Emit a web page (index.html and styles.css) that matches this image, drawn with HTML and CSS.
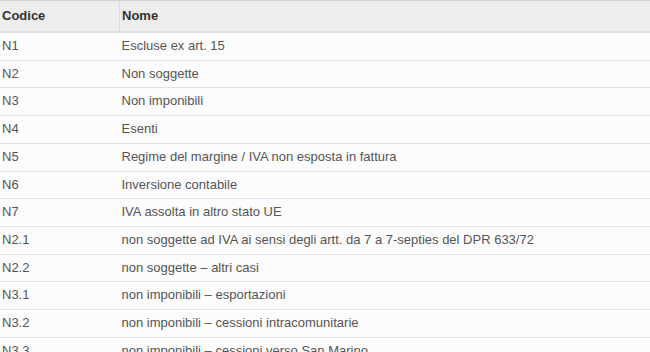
FILE: index.html
```html
<!DOCTYPE html>
<html lang="it">
<head>
<meta charset="utf-8">
<title>Natura</title>
<link rel="stylesheet" href="styles.css">
</head>
<body>
<table class="grid">
  <thead>
    <tr><th class="c-code">Codice</th><th class="c-name">Nome</th></tr>
  </thead>
  <tbody>
    <tr><td>N1</td><td>Escluse ex art. 15</td></tr>
    <tr><td>N2</td><td>Non soggette</td></tr>
    <tr><td>N3</td><td>Non imponibili</td></tr>
    <tr><td>N4</td><td>Esenti</td></tr>
    <tr><td>N5</td><td>Regime del margine / IVA non esposta in fattura</td></tr>
    <tr><td>N6</td><td>Inversione contabile</td></tr>
    <tr><td>N7</td><td>IVA assolta in altro stato UE</td></tr>
    <tr><td>N2.1</td><td>non soggette ad IVA ai sensi degli artt. da 7 a 7-septies del DPR 633/72</td></tr>
    <tr><td>N2.2</td><td>non soggette – altri casi</td></tr>
    <tr><td>N3.1</td><td>non imponibili – esportazioni</td></tr>
    <tr><td>N3.2</td><td>non imponibili – cessioni intracomunitarie</td></tr>
    <tr><td>N3.3</td><td>non imponibili – cessioni verso San Marino</td></tr>
  </tbody>
</table>
</body>
</html>
```
FILE: styles.css
```css
html, body {
  margin: 0;
  padding: 0;
  background: #ffffff;
  overflow: hidden;
}
.grid {
  width: 650px;
  border-collapse: collapse;
  font-family: "Liberation Sans", Arial, sans-serif;
  font-size: 13px;
  line-height: 18.7px;
  color: #555555;
}
.grid th {
  text-align: left;
  font-weight: bold;
  color: #333333;
  background: #ededed;
  border-top: 1px solid #cfcfd4;
  border-bottom: 2px solid #dde0e4;
  padding: 5px 2px 5px 2px;
  height: 20px;
}
.grid th.c-code {
  width: 115px;
  border-right: 1px solid #dcdcdc;
}
.grid td {
  padding: 4px 2px;
  border-top: 1px solid #e2e2e2;
  background: #fcfcfc;
  white-space: nowrap;
}
.grid tbody tr:first-child td {
  border-top: none;
}
```
